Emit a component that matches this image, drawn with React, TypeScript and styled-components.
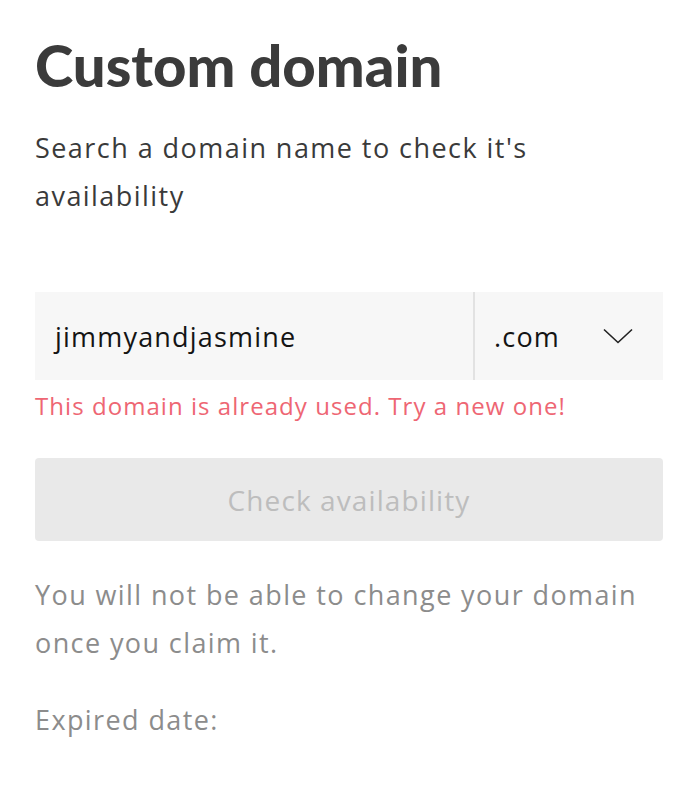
import React from 'react';
import styled, { createGlobalStyle } from 'styled-components';

const GlobalStyle = createGlobalStyle`
  html, body {
    margin: 0;
    padding: 0;
    background: #ffffff;
  }
  body {
    font-family: 'Open Sans', 'Noto Sans', sans-serif;
    -webkit-font-smoothing: antialiased;
  }
`;

const Page = styled.div`
  width: 700px;
  padding: 24px 37px 0 35px;
  box-sizing: border-box;
`;

const Title = styled.h1`
  margin: 0;
  font-family: 'Lato', sans-serif;
  font-size: 58px;
  line-height: 82px;
  font-weight: 900;
  color: #3b3b3b;
`;

const Lead = styled.p`
  margin: 18px 0 0;
  font-size: 27px;
  line-height: 48px;
  letter-spacing: 1.45px;
  color: #3a3a3a;
`;

const DomainField = styled.div`
  display: flex;
  margin-top: 72px;
  height: 88px;
  background: #f7f7f7;
`;

const NameInput = styled.div`
  flex: 1;
  display: flex;
  align-items: center;
  padding-left: 20px;
  font-size: 27px;
  letter-spacing: 1.2px;
  color: #141414;
  border-right: 2px solid #e2e2e2;
`;

const TldSelect = styled.div`
  width: 188px;
  display: flex;
  align-items: center;
  justify-content: space-between;
  padding: 0 30px 0 19px;
  box-sizing: border-box;
  font-size: 27px;
  letter-spacing: 1.2px;
  color: #141414;
`;

const ErrorText = styled.div`
  margin-top: 10px;
  font-size: 24px;
  line-height: 32px;
  letter-spacing: 1.05px;
  color: #ee6673;
`;

const CheckButton = styled.button`
  display: block;
  width: 100%;
  height: 83px;
  margin-top: 36px;
  border: none;
  border-radius: 4px;
  background: #e9e9e9;
  color: #bdbdbd;
  font-family: inherit;
  font-size: 28px;
  letter-spacing: 1.1px;
`;

const Note = styled.p<{ $gap: number }>`
  margin: ${p => p.$gap}px 0 0;
  font-size: 27px;
  line-height: 48px;
  letter-spacing: 1.4px;
  color: #8c8c8c;
`;

function Chevron() {
  return (
    <svg width="30" height="16" viewBox="0 0 30 16" fill="none">
      <path d="M1 1.5 L15 14.5 L29 1.5" stroke="#222" strokeWidth="1.6" />
    </svg>
  );
}

export default function App() {
  return (
    <>
      <GlobalStyle />
      <Page>
        <Title>Custom domain</Title>
        <Lead>
          Search a domain name to check it's
          <br />
          availability
        </Lead>

        <DomainField>
          <NameInput>jimmyandjasmine</NameInput>
          <TldSelect>
            .com
            <Chevron />
          </TldSelect>
        </DomainField>
        <ErrorText>This domain is already used. Try a new one!</ErrorText>

        <CheckButton disabled>Check availability</CheckButton>

        <Note $gap={30}>
          You will not be able to change your domain
          <br />
          once you claim it.
        </Note>
        <Note $gap={29}>Expired date:</Note>
      </Page>
    </>
  );
}
